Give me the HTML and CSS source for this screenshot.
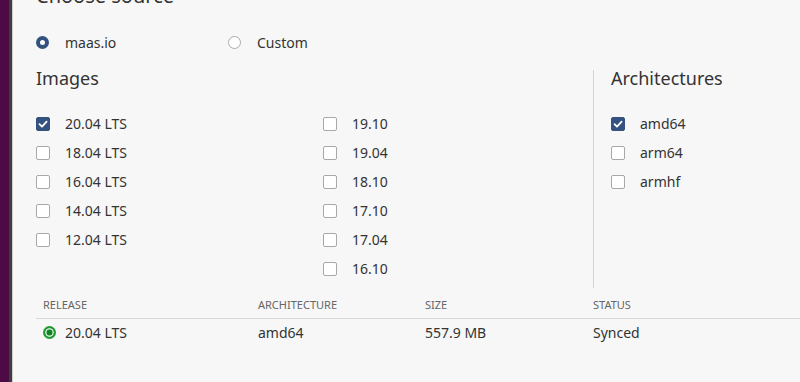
FILE: index.html
```html
<!DOCTYPE html>
<html>
<head>
<meta charset="utf-8">
<link rel="stylesheet" href="styles.css">
</head>
<body>
<div class="app">
  <div class="sidebar-edge"><div class="purple"></div><div class="dark"></div><div class="light"></div></div>
  <main class="panel">
    <h3 class="source-title">Choose source</h3>
    <div class="radios">
      <label class="radio checked"><span class="radio-mark"></span>maas.io</label>
      <label class="radio"><span class="radio-mark"></span>Custom</label>
    </div>
    <div class="selectors">
      <section class="images">
        <h4 class="sub-title">Images</h4>
        <div class="image-grid">
          <div class="col">
            <label class="check checked"><span class="box"><svg viewBox="0 0 14 14"><path d="M3.5 7.2 L6 9.6 L10.6 4.6" fill="none" stroke="#fff" stroke-width="1.8" stroke-linecap="round" stroke-linejoin="round"/></svg></span>20.04 LTS</label>
            <label class="check"><span class="box"></span>18.04 LTS</label>
            <label class="check"><span class="box"></span>16.04 LTS</label>
            <label class="check"><span class="box"></span>14.04 LTS</label>
            <label class="check"><span class="box"></span>12.04 LTS</label>
          </div>
          <div class="col">
            <label class="check"><span class="box"></span>19.10</label>
            <label class="check"><span class="box"></span>19.04</label>
            <label class="check"><span class="box"></span>18.10</label>
            <label class="check"><span class="box"></span>17.10</label>
            <label class="check"><span class="box"></span>17.04</label>
            <label class="check"><span class="box"></span>16.10</label>
          </div>
        </div>
      </section>
      <section class="archs">
        <h4 class="sub-title">Architectures</h4>
        <div class="col">
          <label class="check checked"><span class="box"><svg viewBox="0 0 14 14"><path d="M3.5 7.2 L6 9.6 L10.6 4.6" fill="none" stroke="#fff" stroke-width="1.8" stroke-linecap="round" stroke-linejoin="round"/></svg></span>amd64</label>
          <label class="check"><span class="box"></span>arm64</label>
          <label class="check"><span class="box"></span>armhf</label>
        </div>
      </section>
    </div>
    <div class="table">
      <div class="thead">
        <div>Release</div><div>Architecture</div><div>Size</div><div>Status</div>
      </div>
      <div class="trow">
        <div class="release"><span class="status-dot"></span>20.04 LTS</div><div>amd64</div><div>557.9 MB</div><div>Synced</div>
      </div>
    </div>
  </main>
</div>
</body>
</html>
```
FILE: styles.css
```css
html, body {
  margin: 0;
  padding: 0;
  height: 100%;
  background: #f7f7f7;
  overflow: hidden;
}
body {
  font-family: "Noto Sans", "Open Sans", sans-serif;
  color: #333;
  font-size: 14px;
}
.app {
  display: flex;
  height: 382px;
}
.sidebar-edge {
  display: flex;
  flex: 0 0 auto;
}
.purple { width: 9px; background: #4d0b45; }
.dark { width: 3px; background: #3d3d3d; }
.light { width: 1px; background: #cfcfcf; }
.panel {
  flex: 1;
  padding-left: 23px;
  min-width: 0;
}
.source-title {
  margin: -17px 0 0;
  font-size: 20px;
  line-height: 26px;
  font-weight: 400;
  color: #333;
}
.radios {
  display: flex;
  margin-top: 23px;
  height: 20px;
  align-items: center;
}
.radio {
  display: flex;
  align-items: center;
  width: 192px;
  color: #333;
}
.radio-mark {
  width: 13px;
  height: 13px;
  box-sizing: border-box;
  border-radius: 50%;
  border: 1px solid #aaa;
  background: #fff;
  margin-right: 16px;
}
.radio.checked .radio-mark {
  border: 4px solid #335280;
}
.selectors {
  display: flex;
  margin-top: 14px;
}
.images {
  width: 557px;
  flex: none;
}
.sub-title {
  margin: 0;
  font-size: 18px;
  line-height: 24px;
  font-weight: 400;
  color: #333;
}
.image-grid {
  display: flex;
  margin-top: 19px;
}
.image-grid .col {
  width: 287px;
  flex: none;
}
.col {
  display: flex;
  flex-direction: column;
}
.check {
  display: flex;
  align-items: center;
  height: 29px;
  color: #333;
}
.box {
  width: 14px;
  height: 14px;
  box-sizing: border-box;
  border: 1px solid #a8a8a8;
  border-radius: 2px;
  background: #fff;
  margin-right: 15px;
  display: flex;
  flex: none;
}
.box svg { width: 14px; height: 14px; display: block; margin: -1px; }
.check.checked .box {
  background: #335280;
  border-color: #335280;
}
.archs {
  border-left: 1px solid #d3d3d3;
  padding-left: 17px;
  flex: 1;
  margin-top: 4px;
  height: 218px;
}
.archs .sub-title {
  margin-top: -4px;
}
.archs .col {
  margin-top: 19px;
}
.table {
  margin-top: 2px;
}
.thead, .trow {
  display: grid;
  grid-template-columns: 215px 167px 168px 1fr;
}
.thead {
  border-bottom: 1px solid #d9d9d9;
  height: 28px;
  align-items: center;
  font-size: 11px;
  text-transform: uppercase;
  color: #666;
}
.thead > div, .trow > div {
  padding-left: 7px;
}
.trow {
  height: 26px;
  align-items: center;
  color: #333;
}
.release {
  display: flex;
  align-items: center;
}
.status-dot {
  width: 13px;
  height: 13px;
  box-sizing: border-box;
  border-radius: 50%;
  border: 2px solid #1f9a33;
  background: #0e8420;
  box-shadow: inset 0 0 0 1.5px #d6ecd9;
  margin-right: 9px;
  flex: none;
}
```
